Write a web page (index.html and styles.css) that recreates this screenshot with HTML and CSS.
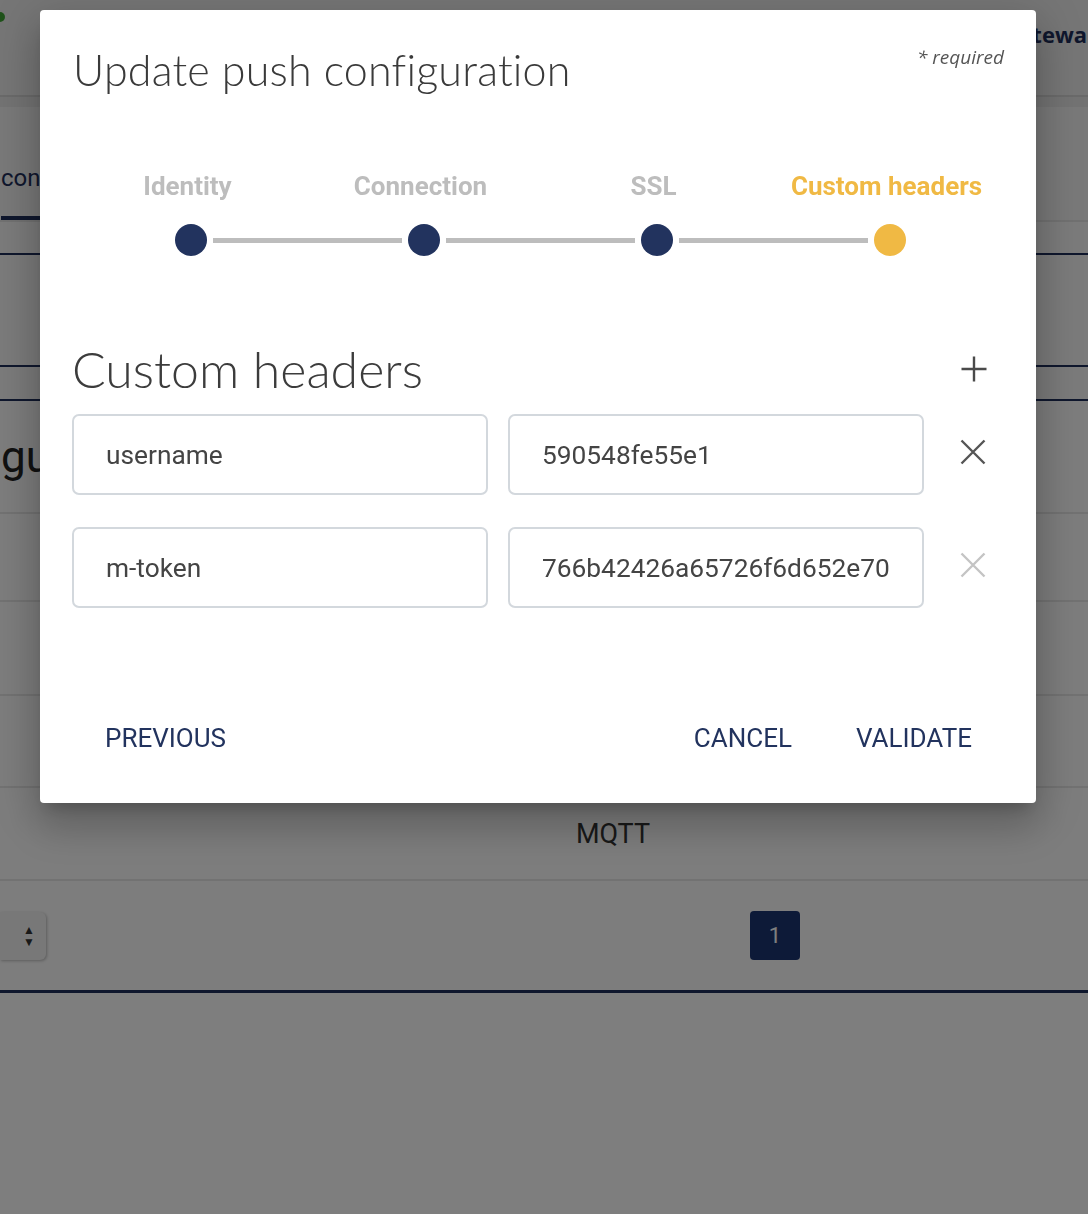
FILE: index.html
```html
<!DOCTYPE html>
<html lang="en">
<head>
<meta charset="utf-8">
<title>Update push configuration</title>
<link rel="stylesheet" href="styles.css">
</head>
<body>
<div class="page">
  <header class="topbar">
    <span class="logo-dot"></span>
    <span class="brand">tewa</span>
  </header>
  <div class="subbar"></div>
  <nav class="tabs">
    <div class="tab active">conf</div>
  </nav>
  <div class="gap1"></div>
  <div class="band"></div>
  <div class="band2"></div>
  <section class="title-row"><h2 class="page-title">gur</h2></section>
  <div class="trow h88"></div>
  <div class="trow h94"></div>
  <div class="trow h92"></div>
  <div class="trow h93"><span class="mqtt">MQTT</span></div>
  <div class="pager">
    <div class="select"><span class="arrows">▲<br>▼</span></div>
    <div class="pagebtn">1</div>
  </div>
</div>

<div class="overlay"></div>

<div class="modal">
  <div class="modal-head">
    <h1 class="modal-title">Update push configuration</h1>
    <span class="required">* required</span>
  </div>

  <div class="stepper">
    <div class="step-labels">
      <span class="step-label">Identity</span>
      <span class="step-label">Connection</span>
      <span class="step-label">SSL</span>
      <span class="step-label current">Custom headers</span>
    </div>
    <div class="step-track">
      <span class="dot"></span><span class="line"></span>
      <span class="dot"></span><span class="line"></span>
      <span class="dot"></span><span class="line"></span>
      <span class="dot current"></span>
    </div>
  </div>

  <div class="section-head">
    <h2 class="section-title">Custom headers</h2>
    <button class="icon-btn" aria-label="add">
      <svg width="28" height="28" viewBox="0 0 28 28"><path d="M14 1.5v25M1.5 14h25" stroke="#4a4a4a" stroke-width="2.4" fill="none"/></svg>
    </button>
  </div>

  <div class="hrow">
    <div class="field">username</div>
    <div class="field">590548fe55e1</div>
    <button class="icon-btn" aria-label="remove">
      <svg width="28" height="28" viewBox="0 0 28 28"><path d="M2.5 2.5l23 23M25.5 2.5l-23 23" stroke="#555" stroke-width="2.4" fill="none"/></svg>
    </button>
  </div>
  <div class="hrow">
    <div class="field">m-token</div>
    <div class="field">766b42426a65726f6d652e70</div>
    <button class="icon-btn" aria-label="remove">
      <svg width="28" height="28" viewBox="0 0 28 28"><path d="M2.5 2.5l23 23M25.5 2.5l-23 23" stroke="#c4c4c4" stroke-width="2.4" fill="none"/></svg>
    </button>
  </div>

  <div class="actions">
    <button class="txt-btn">PREVIOUS</button>
    <span class="spacer"></span>
    <button class="txt-btn">CANCEL</button>
    <button class="txt-btn">VALIDATE</button>
  </div>
</div>
</body>
</html>
```
FILE: styles.css
```css
* { box-sizing: border-box; }
html, body { margin: 0; padding: 0; }
body {
  width: 1088px;
  height: 1214px;
  overflow: hidden;
  background: #fdfdfd;
  font-family: Roboto, "Liberation Sans", sans-serif;
}

/* ---------- background page ---------- */
.page { display: flex; flex-direction: column; }
.topbar {
  height: 95px;
  background: #ececec;
  display: flex;
  align-items: flex-start;
  justify-content: space-between;
}
.logo-dot {
  width: 10px; height: 10px; border-radius: 50%;
  background: #3fa535; margin: 12px 0 0 -5px;
}
.brand {
  font-family: "Open Sans", sans-serif;
  font-weight: 700; font-size: 22px; color: #1f2f5a;
  margin-top: 19px; margin-right: 1px;
}
.subbar { height: 12px; background: #e6e6e6; border-top: 2px solid #d4d4d4; }
.tabs {
  height: 115px;
  background: #f3f3f3;
  display: flex; align-items: flex-end;
  border-bottom: 2px solid #e2e2e2;
}
.tab {
  font-size: 24px; color: #1f2f5a;
  margin-left: 1px; padding-bottom: 24px;
  border-bottom: 4px solid #1f2f5a;
}
.gap1 { height: 33px; background: #f6f6f6; border-bottom: 2px solid #1f2f5a; }
.band { height: 112px; background: #f6f6f6; border-bottom: 2px solid #1f2f5a; }
.band2 { height: 34px; background: #f6f6f6; border-bottom: 2px solid #1f2f5a; }
.title-row {
  height: 113px; background: #fafafa;
  border-bottom: 2px solid #e4e4e4;
  display: flex; align-items: center;
}
.page-title {
  margin: 0 0 0 1px; font-family: Roboto, sans-serif;
  font-weight: 400; font-size: 44px; color: #222;
}
.trow { background: #fafafa; border-bottom: 2px solid #e4e4e4; display: flex; align-items: center; justify-content: center; }
.h88 { height: 88px; }
.h94 { height: 94px; }
.h92 { height: 92px; }
.h93 { height: 93px; }
.mqtt { font-size: 27px; color: #333; margin-left: 138px; }
.pager {
  height: 112px; background: #fafafa;
  border-bottom: 3px solid #1f2f5a;
  display: flex; align-items: center;
}
.select {
  width: 46px; height: 48px; border-radius: 0 6px 6px 0;
  background: #f0f0f0; box-shadow: 1px 1px 3px rgba(0,0,0,.25);
  display: flex; align-items: center; justify-content: flex-end; padding-right: 11px;
}
.arrows { font-size: 12px; line-height: 12px; color: #333; }
.pagebtn {
  width: 50px; height: 49px; margin-left: 704px;
  background: #1b3471; border-radius: 4px;
  color: #fff; font-size: 22px; display: flex; align-items: center; justify-content: center;
}

.overlay {
  position: fixed; inset: 0;
  background: rgba(0,0,0,0.5);
}

/* ---------- modal ---------- */
.modal {
  position: absolute;
  left: 40px; top: 10px;
  width: 996px; height: 793px;
  background: #fff;
  border-radius: 4px;
  box-shadow: 0 11px 15px -7px rgba(0,0,0,.2), 0 24px 38px 3px rgba(0,0,0,.14), 0 9px 46px 8px rgba(0,0,0,.12);
  display: flex; flex-direction: column;
}
.modal-head {
  display: flex; justify-content: space-between; align-items: flex-start;
  padding: 34px 32px 0 33px;
}
.modal-title {
  margin: 0;
  font-family: Lato, "Open Sans", sans-serif;
  font-weight: 300; font-size: 43px; line-height: 52px;
  color: #3a3a3a; letter-spacing: 0.2px;
}
.required {
  font-family: "Open Sans", sans-serif; font-style: italic;
  font-size: 19px; color: #555; margin-top: 0;
}

.stepper { margin-top: 75px; }
.step-labels {
  display: grid; grid-template-columns: repeat(4, 233px);
  padding-left: 31px;
}
.step-label {
  text-align: center; font-size: 26px; font-weight: 700;
  color: #bdbdbd; line-height: 30px;
}
.step-label.current { color: #f0b944; }
.step-track {
  display: flex; align-items: center;
  padding: 0 130px 0 135px; margin-top: 23px;
}
.dot { width: 32px; height: 32px; border-radius: 50%; background: #22335e; flex: none; }
.dot.current { background: #f0b944; }
.line { flex: 1; height: 5px; background: #bdbdbd; margin: 0 6px; }

.section-head {
  display: flex; align-items: center; justify-content: space-between;
  padding: 0 48px 0 32px; margin-top: 85px;
}
.section-title {
  margin: 0; font-family: Lato, "Open Sans", sans-serif;
  font-weight: 300; font-size: 50px; line-height: 56px; color: #3c3c3c;
}
.icon-btn {
  border: 0; background: none; padding: 0; width: 28px; height: 28px;
  display: flex; align-items: center; justify-content: center; flex: none;
}
.hrow {
  display: flex; align-items: center;
  padding: 0 0 0 32px; gap: 20px;
  margin-top: 17px;
}
.hrow + .hrow { margin-top: 32px; }
.hrow .icon-btn { margin-left: 15px; margin-top: -6px; }
.field {
  flex: none;
  width: 416px; height: 81px;
  border: 2px solid #d3d8dd; border-radius: 7px;
  padding-left: 32px;
  display: flex; align-items: center;
  font-size: 26.3px; color: #444;
}

.actions {
  display: flex; align-items: center;
  padding: 0 52px 0 53px; margin-top: 107px;
}
.spacer { flex: 1; }
.txt-btn {
  border: 0; background: none; padding: 8px 12px;
  font-family: Roboto, sans-serif; font-size: 26px; color: #22335e;
  letter-spacing: 0;
}
.txt-btn + .txt-btn { margin-left: 40px; }
```
